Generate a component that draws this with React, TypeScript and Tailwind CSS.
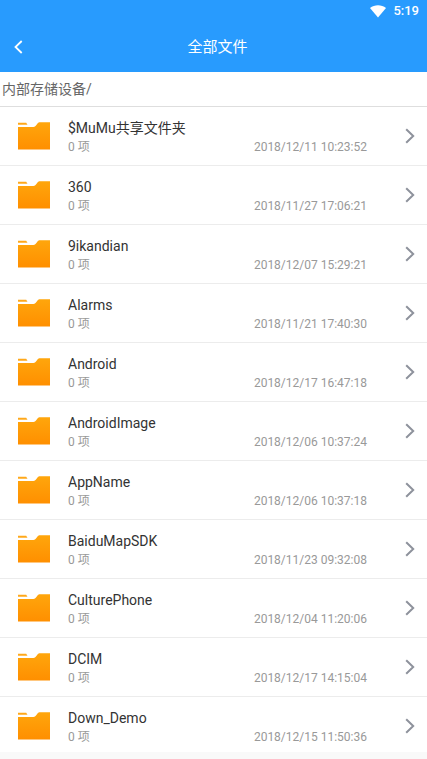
type FileEntry = {
  name: string;
  count: number;
  modified: string;
};

const entries: FileEntry[] = [
  { name: "$MuMu共享文件夹", count: 0, modified: "2018/12/11 10:23:52" },
  { name: "360", count: 0, modified: "2018/11/27 17:06:21" },
  { name: "9ikandian", count: 0, modified: "2018/12/07 15:29:21" },
  { name: "Alarms", count: 0, modified: "2018/11/21 17:40:30" },
  { name: "Android", count: 0, modified: "2018/12/17 16:47:18" },
  { name: "AndroidImage", count: 0, modified: "2018/12/06 10:37:24" },
  { name: "AppName", count: 0, modified: "2018/12/06 10:37:18" },
  { name: "BaiduMapSDK", count: 0, modified: "2018/11/23 09:32:08" },
  { name: "CulturePhone", count: 0, modified: "2018/12/04 11:20:06" },
  { name: "DCIM", count: 0, modified: "2018/12/17 14:15:04" },
  { name: "Down_Demo", count: 0, modified: "2018/12/15 11:50:36" },
];

function WifiIcon() {
  return (
    <svg width="16" height="13" viewBox="0 0 16 13" fill="#fff" aria-hidden="true">
      <path d="M0 3C4.500-.7 11.500-.7 16 3L8 12.500z" />
    </svg>
  );
}

function FolderIcon() {
  return (
    <svg width="32" height="28" viewBox="0 0 32 28" className="shrink-0" aria-hidden="true">
      <defs>
        <linearGradient id="folder" x1="0" y1="0" x2="0" y2="1">
          <stop offset="0" stopColor="#ffa60c" />
          <stop offset="1" stopColor="#ff8f00" />
        </linearGradient>
      </defs>
      <path d="M0 .8h8.200l1.300 1.900H0z" fill="#ffa81a" />
      <path d="M0 5h15.500c1.200 0 1.800-.5 2.500-1.400l1.900-2.500C20.400.4 21 .3 21.800.3H32V27.500H0z" fill="url(#folder)" />
    </svg>
  );
}

function ChevronRight() {
  return (
    <svg width="10" height="16" viewBox="0 0 10 16" fill="none" className="shrink-0" aria-hidden="true">
      <path d="M1.200 1.200L8.200 8l-7 6.800" stroke="#8e929c" strokeWidth="2" />
    </svg>
  );
}

function FileRow({ entry }: { entry: FileEntry }) {
  return (
    <li className="group border-b border-[#ececec] bg-white last:border-b-0">
      <button
        type="button"
        className="flex w-full items-center py-[10px] pl-[18px] pr-3 text-left group-last:pb-[7px]"
      >
        <FolderIcon />
        <span className="ml-[18px] min-w-0 flex-1">
          <span className="block truncate text-sm leading-[22px] text-[#333]">{entry.name}</span>
          <span className="flex items-center justify-between text-xs leading-4 text-[#999]">
            <span>{entry.count} 项</span>
            <time>{entry.modified}</time>
          </span>
        </span>
        <span className="ml-[38px] flex">
          <ChevronRight />
        </span>
      </button>
    </li>
  );
}

export default function App() {
  return (
    <div className="min-h-screen bg-[#f9f9f9] font-[Roboto,'Noto_Sans_CJK_SC',sans-serif]">
      <header className="bg-[#289bfe] text-white">
        <div className="flex h-[22px] items-center justify-end gap-[7px] pr-2">
          <WifiIcon />
          <span className="text-[13px] font-medium">5:19</span>
        </div>
        <div className="grid h-[50px] grid-cols-[40px_1fr_32px] items-center">
          <button type="button" aria-label="返回" className="flex h-full items-center pl-[14px]">
            <svg width="9" height="14" viewBox="0 0 9 14" fill="none" aria-hidden="true">
              <path d="M7.700 1L1.500 7l6.200 6" stroke="#fff" strokeWidth="1.800" />
            </svg>
          </button>
          <h1 className="text-center text-[15px]">全部文件</h1>
        </div>
      </header>

      <nav className="flex h-[35px] items-center border-b border-[#dedede] bg-white px-[2px] text-sm text-[#666]">
        内部存储设备/
      </nav>

      <ul>
        {entries.map((entry) => (
          <FileRow key={entry.name} entry={entry} />
        ))}
      </ul>
    </div>
  );
}
